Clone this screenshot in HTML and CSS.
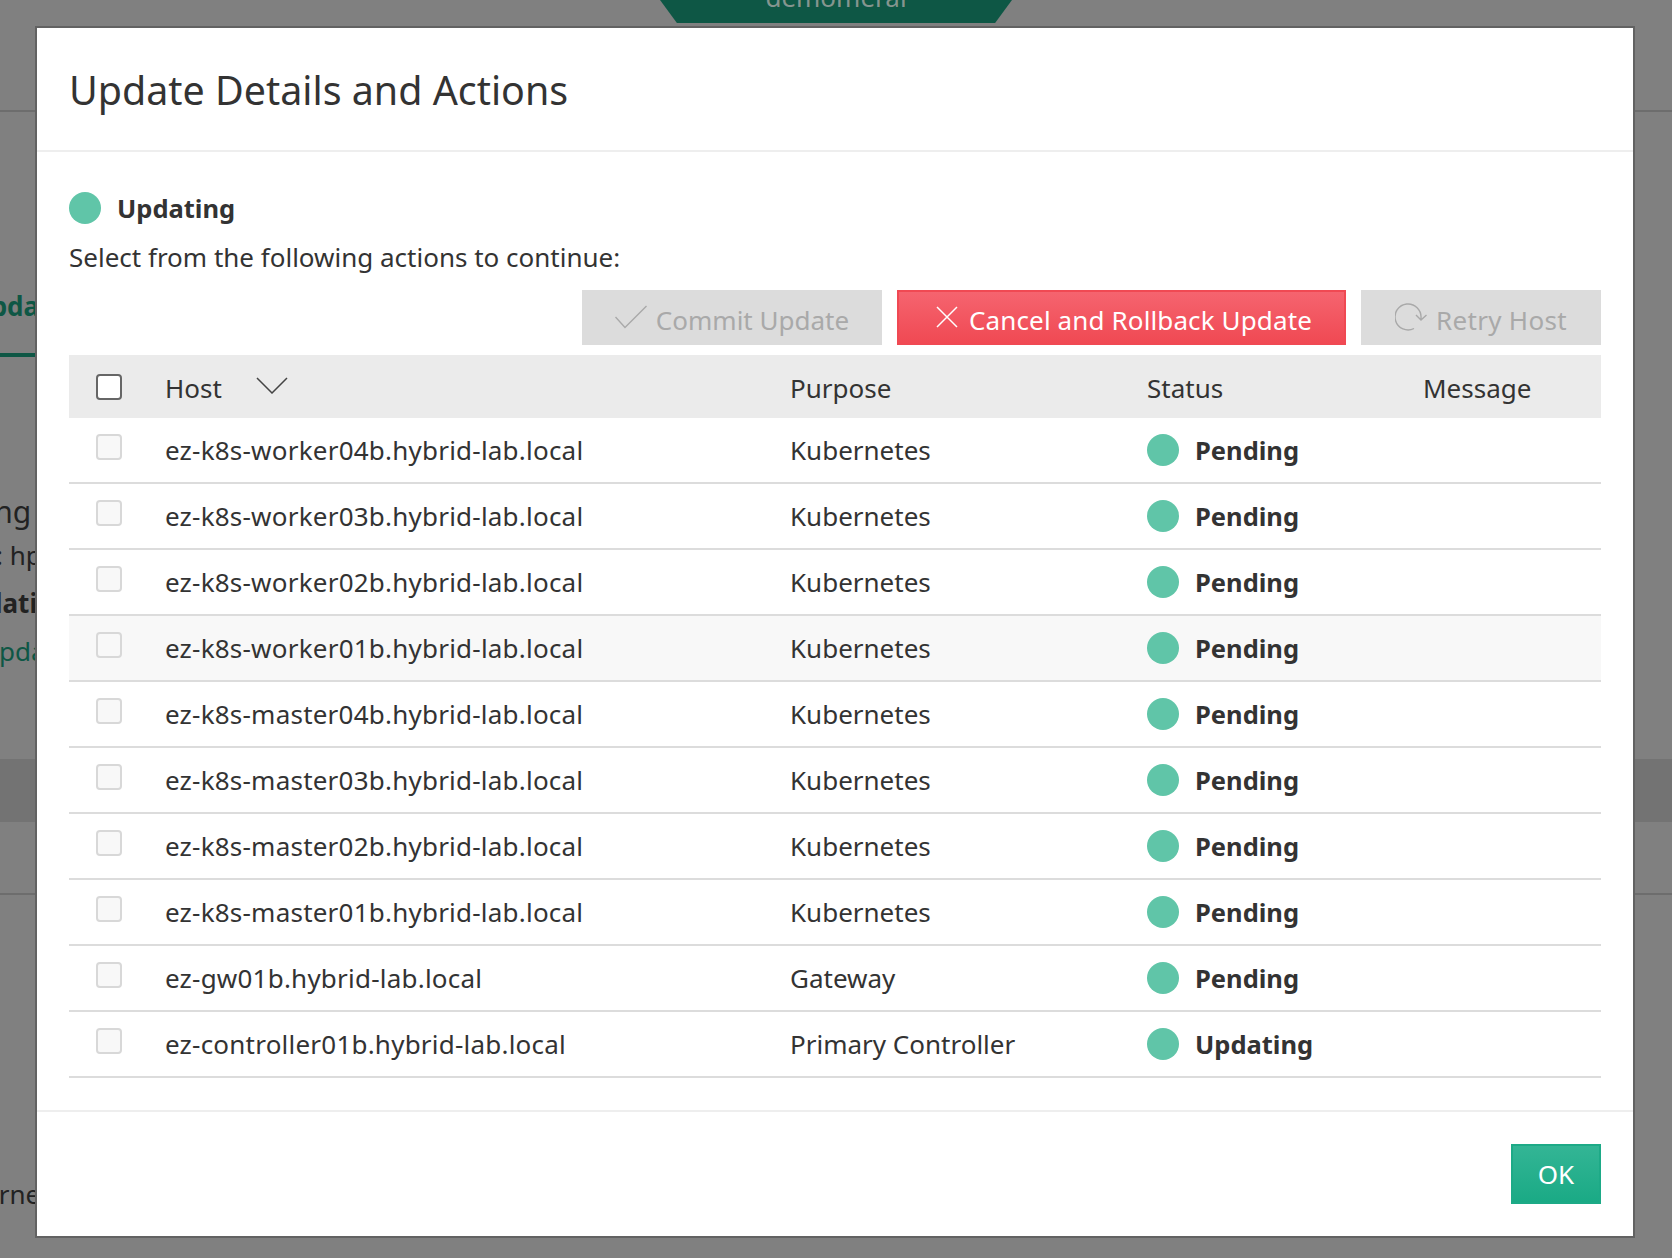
FILE: index.html
```html
<!DOCTYPE html>
<html lang="en-US">
    <head>
        <title>Update Details and Actions</title>
        <meta name="viewport" content="width=device-width, initial-scale=1.0">
        <link rel="stylesheet" href="styles.css">
    </head>
    <body>

        <!-- page behind the modal, only the edges show -->
        <div class="page">
            <div class="tab"><span>demomeral</span></div>
            <div class="page-line"></div>
            <div class="page-tabs"><span>Updates</span></div>
            <div class="page-info">
                <p class="info-big">Updating</p>
                <p class="info-host">at: hpe</p>
                <p class="info-bold">Updating</p>
                <p class="info-link">Update</p>
            </div>
            <div class="page-band"></div>
            <div class="page-line page-line-low"></div>
            <p class="page-foot">Kuberne</p>
        </div>

        <div class="modal">
            <header class="modal-head">
                <h1>Update Details and Actions</h1>
            </header>

            <div class="modal-body">
                <div class="state">
                    <span class="dot"></span>
                    <strong>Updating</strong>
                </div>
                <p class="hint">Select from the following actions to continue:</p>

                <div class="actions">
                    <button class="btn btn-off btn-commit">
                        <svg width="32" height="24" viewBox="0 0 32 24"><path d="M.5 12L10 22.5 31.5 1" fill="none" stroke="#a9a9a9" stroke-width="1.4"/></svg>
                        Commit Update
                    </button>
                    <button class="btn btn-red">
                        <svg width="22" height="22" viewBox="0 0 22 22"><path d="M1 1l20 20M21 1L1 21" fill="none" stroke="#fff" stroke-width="1.5"/></svg>
                        Cancel and Rollback Update
                    </button>
                    <button class="btn btn-off btn-retry">
                        <svg width="32" height="30" viewBox="0 0 32 30"><path d="M19 26.5A13 13 0 1 1 26 16v2M21 13l5 5 5.500-5" fill="none" stroke="#a9a9a9" stroke-width="1.4"/></svg>
                        Retry Host
                    </button>
                </div>

                <table class="hosts">
                    <thead>
                        <tr>
                            <th class="col-check"><span class="box box-on"></span></th>
                            <th class="col-host">Host
                                <svg class="sort" width="32" height="17" viewBox="0 0 32 17"><path d="M1 1l15 15L31 1" fill="none" stroke="#444" stroke-width="1.5"/></svg>
                            </th>
                            <th class="col-purpose">Purpose</th>
                            <th class="col-status">Status</th>
                            <th>Message</th>
                        </tr>
                    </thead>
                    <tbody>
                        <tr>
                            <td><span class="box"></span></td>
                            <td class="name">ez-k8s-worker04b.hybrid-lab.local</td>
                            <td>Kubernetes</td>
                            <td><div class="state"><span class="dot"></span><strong>Pending</strong></div></td>
                            <td></td>
                        </tr>
                        <tr>
                            <td><span class="box"></span></td>
                            <td class="name">ez-k8s-worker03b.hybrid-lab.local</td>
                            <td>Kubernetes</td>
                            <td><div class="state"><span class="dot"></span><strong>Pending</strong></div></td>
                            <td></td>
                        </tr>
                        <tr>
                            <td><span class="box"></span></td>
                            <td class="name">ez-k8s-worker02b.hybrid-lab.local</td>
                            <td>Kubernetes</td>
                            <td><div class="state"><span class="dot"></span><strong>Pending</strong></div></td>
                            <td></td>
                        </tr>
                        <tr class="hover">
                            <td><span class="box"></span></td>
                            <td class="name">ez-k8s-worker01b.hybrid-lab.local</td>
                            <td>Kubernetes</td>
                            <td><div class="state"><span class="dot"></span><strong>Pending</strong></div></td>
                            <td></td>
                        </tr>
                        <tr>
                            <td><span class="box"></span></td>
                            <td class="name">ez-k8s-master04b.hybrid-lab.local</td>
                            <td>Kubernetes</td>
                            <td><div class="state"><span class="dot"></span><strong>Pending</strong></div></td>
                            <td></td>
                        </tr>
                        <tr>
                            <td><span class="box"></span></td>
                            <td class="name">ez-k8s-master03b.hybrid-lab.local</td>
                            <td>Kubernetes</td>
                            <td><div class="state"><span class="dot"></span><strong>Pending</strong></div></td>
                            <td></td>
                        </tr>
                        <tr>
                            <td><span class="box"></span></td>
                            <td class="name">ez-k8s-master02b.hybrid-lab.local</td>
                            <td>Kubernetes</td>
                            <td><div class="state"><span class="dot"></span><strong>Pending</strong></div></td>
                            <td></td>
                        </tr>
                        <tr>
                            <td><span class="box"></span></td>
                            <td class="name">ez-k8s-master01b.hybrid-lab.local</td>
                            <td>Kubernetes</td>
                            <td><div class="state"><span class="dot"></span><strong>Pending</strong></div></td>
                            <td></td>
                        </tr>
                        <tr>
                            <td><span class="box"></span></td>
                            <td class="name">ez-gw01b.hybrid-lab.local</td>
                            <td>Gateway</td>
                            <td><div class="state"><span class="dot"></span><strong>Pending</strong></div></td>
                            <td></td>
                        </tr>
                        <tr>
                            <td><span class="box"></span></td>
                            <td class="name">ez-controller01b.hybrid-lab.local</td>
                            <td>Primary Controller</td>
                            <td><div class="state"><span class="dot"></span><strong>Updating</strong></div></td>
                            <td></td>
                        </tr>
                    </tbody>
                </table>
            </div>

            <footer class="modal-foot">
                <button class="btn btn-ok">OK</button>
            </footer>
        </div>

    </body>
</html>
```

FILE: styles.css
```css
* {
    box-sizing: border-box;
    margin: 0;
}

html {
    background: #808080;
    color: #333;
    font-family: "Noto Sans", sans-serif;
    font-size: 26px;
}

body {
    height: 1258px;
    overflow: hidden;
    position: relative;
}

/* backdrop */
.page {
    height: 100%;
}

.tab {
    width: 352px;
    height: 23px;
    margin: 0 auto;
    background: #0e5745;
    clip-path: polygon(0 0, 100% 0, 95.200% 100%, 4.800% 100%);
    color: #85958f;
    text-align: center;
    line-height: 0;
}

.tab span {
    display: block;
    transform: translateY(-3px);
}

.page-line {
    height: 2px;
    margin-top: 87px;
    background: #6d6d6d;
}

.page-tabs {
    height: 245px;
    padding-top: 176px;
    border-bottom: 4px solid #0e5745;
    width: 60px;
    color: #0e5745;
    font-weight: 700;
    text-indent: -29px;
    white-space: nowrap;
    overflow: hidden;
}

.page-info {
    height: 402px;
    padding-top: 134px;
    white-space: nowrap;
    overflow: hidden;
    color: #222;
}

.page-info p {
    height: 48px;
}

.page-info .info-big {
    height: 46px;
    font-size: 30px;
    text-indent: -100px;
}

.info-host {
    text-indent: -28px;
}

.info-bold {
    text-indent: -50px;
    font-weight: 700;
}

.info-link {
    text-indent: -20px;
    color: #0e5745;
}

.page-band {
    height: 63px;
    background: #737373;
}

.page-line-low {
    margin-top: 71px;
}

.page-foot {
    margin-top: 281px;
    text-indent: -64px;
    color: #222;
    white-space: nowrap;
    overflow: hidden;
}

/* modal */
.modal {
    position: absolute;
    left: 35px;
    top: 26px;
    width: 1600px;
    height: 1212px;
    padding: 2px;
    background: #fff;
    box-shadow: inset 0 0 0 2px #626262;
    display: flex;
    flex-direction: column;
}

.modal-head {
    height: 124px;
    padding: 35px 32px 0;
    border-bottom: 2px solid #eee;
}

h1 {
    font-size: 39.400px;
    font-weight: 400;
    line-height: 54px;
}

.modal-body {
    flex: 1;
    padding: 40px 32px 0;
}

.state {
    display: flex;
    align-items: center;
    gap: 16px;
    height: 32px;
}

.state strong {
    font-size: 25.500px;
}

.dot {
    width: 32px;
    height: 32px;
    border-radius: 50%;
    background: #60c5a8;
}

.hint {
    margin-top: 15px;
    line-height: 36px;
}

.actions {
    display: flex;
    justify-content: flex-end;
    gap: 15px;
    margin-top: 15px;
}

.btn {
    height: 55px;
    padding: 4px 0 0;
    border: none;
    font: inherit;
    display: flex;
    align-items: center;
    justify-content: center;
    gap: 9px;
}

.btn svg {
    margin-top: -6px;
}

.btn-off {
    background: #dcdcdc;
    color: #a9a9a9;
}

.btn-commit {
    width: 300px;
}

.btn-retry {
    width: 240px;
    letter-spacing: .3px;
}

.btn-red {
    width: 449px;
    padding-left: 5px;
    gap: 11px;
    background: linear-gradient(#f5646f, #f04953);
    border: 2px solid #f04953;
    color: #fff;
    letter-spacing: .12px;
}

.btn-ok {
    width: 90px;
    height: 60px;
    padding: 0;
    background: linear-gradient(#33b595, #1aaa85);
    border: 2px solid #1daa87;
    color: #fff;
}

.hosts {
    width: 100%;
    margin-top: 10px;
    border-collapse: separate;
    border-spacing: 0;
    table-layout: fixed;
}

.hosts th, .hosts td {
    padding: 0;
}

.hosts th {
    height: 63px;
    padding-top: 2px;
    background: #ebebeb;
    font-weight: 400;
    text-align: left;
    position: relative;
}

.hosts td {
    height: 66px;
    border-bottom: 2px solid #dcdcdc;
}

.hosts .name {
    letter-spacing: .22px;
}

.hosts tr.hover td {
    background: #f8f8f8;
}

.col-check {
    width: 96px;
}

.col-host {
    width: 625px;
}

.col-purpose {
    width: 357px;
}

.col-status {
    width: 276px;
}

.sort {
    position: absolute;
    left: 91px;
    top: 22px;
}

.box {
    display: block;
    width: 26px;
    height: 26px;
    margin: -6px 0 0 27px;
    background: #f8f8f8;
    border: 2px solid #d8d8d8;
    border-radius: 4px;
}

.hosts .box-on {
    margin-top: -2px;
    background: #fff;
    border-color: #666;
}

.modal-foot {
    height: 126px;
    padding: 32px 32px 0;
    border-top: 2px solid #eee;
    display: flex;
    justify-content: flex-end;
    align-items: flex-start;
}
```
